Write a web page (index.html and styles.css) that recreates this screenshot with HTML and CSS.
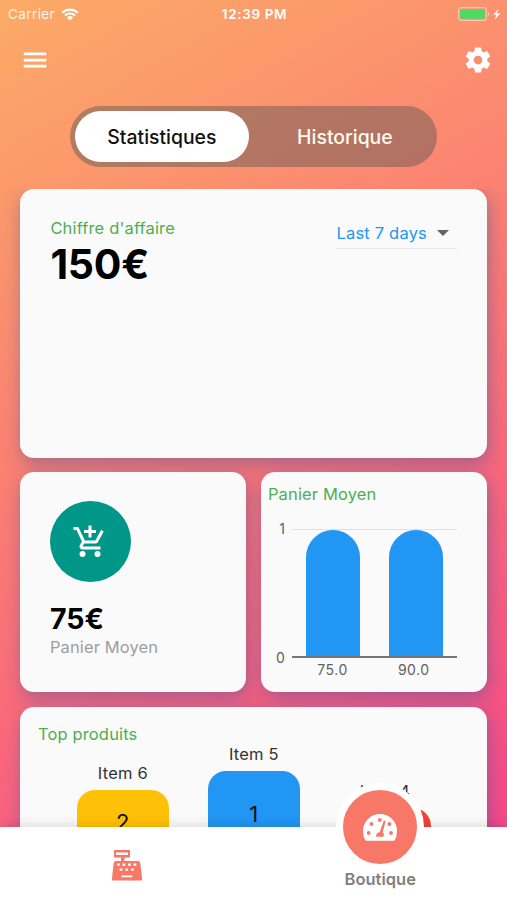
FILE: index.html
```html
<!DOCTYPE html>
<html lang="fr">
<head>
<meta charset="utf-8">
<title>Boutique</title>
<link rel="stylesheet" href="styles.css">
</head>
<body>
<div class="phone">
  <header class="status">
    <div class="carrier"><span>Carrier</span>
      <svg width="18" height="13" viewBox="0 0 18 13"><path d="M1.2 4.7a11.4 11.4 0 0 1 15.6 0M3.9 7.6a7.4 7.4 0 0 1 10.2 0" fill="none" stroke="#fff" stroke-width="2.1"/><path d="M5.8 9.4a4.7 4.7 0 0 1 6.4 0L9 12.6z" fill="#fff"/></svg>
    </div>
    <time class="clock">12:39 PM</time>
    <svg class="battery" width="43" height="14" viewBox="0 0 43 14"><rect x=".7" y=".7" width="27.6" height="12.6" rx="2.5" fill="none" stroke="#fff" stroke-opacity=".5" stroke-width="1.2"/><rect x="2.2" y="2.2" width="24.6" height="9.6" rx="1" fill="#4cd964"/><path d="M30 5c1.500.6 1.500 3.400 0 4z" fill="#fff" fill-opacity=".5"/><path d="M40.500 1.500 35.300 7.800h3.200L36.600 13l5.600-6.600h-3.300z" fill="#fff"/></svg>
  </header>
  <div class="toolbar">
    <svg width="30" height="30" viewBox="0 0 24 24"><path d="M3 18h18v-2.200H3zm0-4.900h18v-2.200H3zM3 6v2.200h18V6z"/></svg>
    <svg width="30" height="30" viewBox="0 0 24 24"><path d="M19.430 12.980c.04-.32.070-.64.070-.98s-.03-.66-.07-.98l2.110-1.650c.19-.15.240-.42.120-.64l-2-3.460c-.12-.22-.39-.3-.61-.22l-2.490 1c-.52-.4-1.080-.73-1.690-.98l-.38-2.650A.49.49 0 0 0 14 2h-4c-.25 0-.46.180-.49.420l-.38 2.650c-.61.250-1.170.59-1.690.98l-2.490-1c-.23-.09-.49 0-.61.220l-2 3.460c-.13.220-.07.490.12.640l2.110 1.650c-.04.320-.07.650-.07.980s.03.660.07.980l-2.110 1.650c-.19.150-.24.420-.12.640l2 3.460c.12.220.39.300.61.220l2.490-1c.52.400 1.080.730 1.690.980l.38 2.650c.03.240.24.420.49.420h4c.25 0 .46-.18.490-.42l.38-2.650c.61-.25 1.170-.59 1.690-.98l2.490 1c.23.090.49 0 .61-.22l2-3.460c.12-.22.070-.49-.12-.64zM12 15.500a3.500 3.500 0 1 1 0-7 3.500 3.500 0 0 1 0 7z"/></svg>
  </div>
  <nav class="tabs">
    <a class="tab active">Statistiques</a>
    <a class="tab">Historique</a>
  </nav>
  <main class="cards">
    <section class="card revenue">
      <div><h2 class="label">Chiffre d'affaire</h2><div class="total">150€</div></div>
      <div class="period"><span>Last 7 days</span><svg width="12" height="6" viewBox="0 0 12 6"><path d="M0 0h12L6 6z" fill="#616161"/></svg></div>
    </section>
    <section class="card basket">
      <div class="disc"><svg width="36" height="36" viewBox="0 0 24 24"><path d="M11 9h2V6h3V4h-3V1h-2v3H8v2h3zm-4 9a2 2 0 1 0 0 4 2 2 0 0 0 0-4zm10 0a2 2 0 1 0 0 4 2 2 0 0 0 0-4zm-9.830-3.250.03-.12.900-1.630h7.450c.75 0 1.410-.41 1.750-1.030l3.860-7.010L19.420 4h-.01l-1.100 2-2.760 5H8.530l-.13-.27L6.160 6l-.95-2-.94-2H1v2h2l3.600 7.590-1.350 2.450c-.16.280-.25.610-.25.960 0 1.100.9 2 2 2h12v-2H7.420c-.13 0-.25-.11-.25-.25z" fill="#fff"/></svg></div>
      <div class="amount">75€</div>
      <div class="caption">Panier Moyen</div>
    </section>
    <section class="card chart">
      <h2 class="label">Panier Moyen</h2>
      <div class="chart-body">
        <div class="axis"><span>1</span><span>0</span></div>
        <div class="plot"><i class="bar"></i><i class="bar"></i></div>
        <div class="ticks"><span>75.0</span><span>90.0</span></div>
      </div>
    </section>
    <section class="card top">
      <h2 class="label">Top produits</h2>
      <div class="podium">
        <div class="place second"><span>Item 6</span><div class="block">2</div></div>
        <div class="place first"><span>Item 5</span><div class="block">1</div></div>
        <div class="place third"><span>Item 4</span><div class="block"></div></div>
      </div>
    </section>
  </main>
  <footer class="bottom">
    <a class="nav-item"><svg width="30" height="31" viewBox="0 0 30 31"><path fill="#f77866" fill-rule="evenodd" d="M2 0h16v7.500h-5.500V11H26q2 0 2.300 2L30 28v1.500q0 1-1 1H1q-1 0-1-1V28l1.700-15q.3-2 2.300-2h5V7.500H2zM4 2.500V5h12V2.500zM5 13.500v2.300h2.800v-2.300zm5.500 0v2.300h2.800v-2.300zm5.500 0v2.300h2.800v-2.300zm5.500 0v2.300h2.800v-2.300zM7.700 18.500v2.300h2.800v-2.300zm5.600 0v2.300h2.800v-2.300zm5.600 0v2.300h2.800v-2.300zM9.300 25.500v1.800h11v-1.800z"/></svg></a>
    <a class="nav-item current">
      <div class="bubble"><svg width="34" height="27" viewBox="0 0 34 27"><path d="M2 26q-2-4-2-9a17 17 0 0 1 34 0q0 5-2 9-.5.700-1.500.700H3.500Q2.500 26.700 2 26z" fill="#fff"/><g fill="#f77866"><circle cx="5.700" cy="19" r="1.900"/><circle cx="8.500" cy="10" r="1.900"/><circle cx="16.800" cy="6" r="1.900"/><circle cx="26.300" cy="10" r="1.900"/><circle cx="28" cy="19" r="1.900"/><path d="m20.800 6.500 1.900.6-3 11.500c1.500.8 1.500 2.500.6 4.200h-7c-.6-2.300.6-4.100 3.400-4.500z"/></g></svg></div>
      <span>Boutique</span>
    </a>
  </footer>
</div>
</body>
</html>
```

FILE: styles.css
```css
* { box-sizing: border-box; }
body { margin: 0; font-family: Inter, "Liberation Sans", sans-serif; }
h2 { margin: 0; font-weight: 400; }
svg { display: block; flex: none; }
.phone {
  width: 507px; height: 900px; overflow: hidden;
  display: flex; flex-direction: column;
  background: linear-gradient(150.6deg, #fbab66 0%, #fb7676 50%, #f7418c 100%);
}
.status {
  flex: none; height: 28px; padding: 0 6px 0 8px; color: #fff;
  display: grid; grid-template-columns: 1fr auto 1fr; align-items: center;
}
.carrier { display: flex; align-items: center; gap: 6px; font-size: 13.500px; letter-spacing: .4px; }
.carrier span { opacity: .85; }
.clock { font-size: 13.500px; font-weight: 600; letter-spacing: .65px; }
.battery { justify-self: end; margin-top: -1px; }
.toolbar { flex: none; height: 64px; padding: 0 14.500px 0 20px; display: flex; align-items: center; justify-content: space-between; fill: #fff; }
.tabs {
  flex: none; width: 367px; height: 61px; margin: 14px 0 22px 70.400px; padding: 5px;
  display: flex; border-radius: 31px; background: rgba(85, 85, 85, .44);
}
.tab { flex: 0 0 174px; display: flex; align-items: center; justify-content: center; padding: 0 1px 0 0; border-radius: 26px; color: #fffaf0; font-size: 19.400px; font-weight: 500; }
.tab + .tab { flex: 1; padding-left: 9px; }
.active { background: #fff; color: #111; }
.cards {
  flex: 1; min-height: 0; padding: 0 20px 0 20.400px; overflow: hidden;
  display: grid; grid-template-columns: 226px 226px; grid-template-rows: 269px 220px 230px; gap: 14.400px 15px;
}
.card { background: #fafafa; border-radius: 14px; box-shadow: 2px 6px 18px rgba(80, 85, 155, .5); }
.label { color: #4caf50; font-size: 16.500px; line-height: 20px; letter-spacing: .15px; }
.revenue { grid-column: span 2; padding: 29px 30px; display: flex; justify-content: space-between; align-items: flex-start; }
.total { font-size: 41px; line-height: 52px; font-weight: 700; letter-spacing: -.2px; }
.period { width: 121px; height: 30px; margin-top: 1px; padding: 0 8px 1px 0; display: flex; align-items: center; justify-content: space-between; border-bottom: 1px solid #e6e6e6; color: #2196f3; font-size: 16.500px; letter-spacing: .2px; }
.basket { padding: 29px 29.600px; }
.disc { width: 81px; height: 81px; border-radius: 50%; background: #009688; display: flex; align-items: center; justify-content: center; }
.amount { margin-top: 19px; font-size: 28.500px; line-height: 36px; font-weight: 700; }
.caption { color: #9e9e9e; font-size: 16.500px; line-height: 20px; letter-spacing: .1px; }
.chart { padding: 12px 30px 0 6.500px; }
.chart-body { display: grid; grid-template-columns: 24px 1fr; grid-template-rows: 129px 24px; margin-top: 25px; color: #616161; font-size: 14px; }
.axis { display: flex; flex-direction: column; justify-content: space-between; margin: -9px 7px -8px 0; line-height: 17px; text-align: right; }
.plot { display: flex; justify-content: space-around; border-top: 1px solid #e0e0e0; border-bottom: 2px solid #757575; }
.bar { width: 54px; border-radius: 27px 27px 0 0; background: #2196f3; }
.ticks { grid-column: 2; display: flex; justify-content: space-around; padding: 3px 3px 0 0; line-height: 17px; letter-spacing: .5px; }
.ticks span { width: 54px; text-align: center; }
.top { grid-column: span 2; padding: 17px 0 0 17.500px; }
.podium { display: flex; gap: 39px; padding-left: 39px; }
.place { width: 92px; text-align: center; color: #333; font-size: 16.500px; line-height: 20px; letter-spacing: .2px; }
.block { height: 160px; margin-top: 7px; padding-top: 20px; border-radius: 18px; color: #111; font-size: 22px; line-height: 25px; }
.second { padding-top: 19px; }
.second .block { background: #ffc107; }
.first .block { background: #2196f3; padding-top: 31px; }
.third { padding-top: 37px; }
.third .block { background: #f44336; }
.bottom { position: relative; flex: none; height: 73px; display: grid; grid-template-columns: 1fr 1fr; background: #fff; box-shadow: 0 -2px 10px rgba(0, 0, 0, .12); }
.nav-item { display: flex; flex-direction: column; align-items: center; }
.nav-item > svg { margin-top: 23px; }
.current { color: #808080; font-size: 16.500px; line-height: 20px; font-weight: 600; }
.bubble { width: 88px; height: 88px; margin: -44px 0 -2px; border: 7px solid #fff; border-radius: 50%; background: #f77866; display: flex; align-items: center; justify-content: center; }
```
